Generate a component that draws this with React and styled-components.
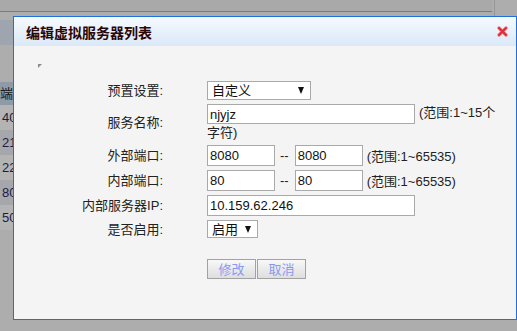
import React from 'react';
import styled, { createGlobalStyle } from 'styled-components';

const GlobalStyle = createGlobalStyle`
  html, body {
    margin: 0;
    padding: 0;
  }
  body {
    background: #adadad;
    font-family: "Liberation Sans", "Noto Sans CJK SC", sans-serif;
    font-size: 13px;
    overflow: hidden;
  }
`;

const Page = styled.div`
  position: relative;
  width: 517px;
  height: 331px;
  overflow: hidden;
  background: #adadad;
`;

/* the page behind the dialog, dimmed */
const TopBar = styled.div`
  display: flex;
  height: 16px;
`;

const TopLine = styled.div`
  width: 492px;
  height: 11px;
  background: #a9a9a9;
  border-bottom: 1px solid #7b7b7b;
`;

const TopDivider = styled.div`
  width: 1px;
  margin-left: 2px;
  background: #979797;
`;

const TabBand = styled.div`
  height: 25px;
  margin-top: 4px;
  background: #9ea5ae;
`;

const ListTable = styled.div`
  margin-top: 37px;
  width: 120px;
`;

const ListRow = styled.div`
  height: ${({ $head }) => ($head ? 23 : 25)}px;
  line-height: ${({ $head }) => ($head ? 23 : 25)}px;
  padding-left: ${({ $head }) => ($head ? 0 : 2)}px;
  white-space: nowrap;
  color: ${({ $head }) => ($head ? '#161616' : '#1c1c44')};
  background: ${({ $head, $alt }) => ($head ? '#8f9aa7' : $alt ? '#a5a7ab' : '#b4b4b4')};
`;

/* dialog */
const Dialog = styled.div`
  position: absolute;
  left: 13px;
  top: 16px;
  width: 504px;
  height: 304px;
  box-sizing: border-box;
  border: 1px solid #1f6fdf;
  background: #f4f4f4;
  display: flex;
  flex-direction: column;
`;

const TitleBar = styled.div`
  flex: none;
  height: 29px;
  display: flex;
  align-items: center;
  justify-content: space-between;
  padding: 0 8px 0 12px;
  background: linear-gradient(#f6faff, #dae8f8);
`;

const Title = styled.h1`
  margin: 0;
  font-family: "Noto Sans CJK SC", sans-serif;
  font-size: 14px;
  font-weight: bold;
  line-height: 16px;
  color: #2b0606;
`;

const CloseButton = styled.span`
  display: flex;
  width: 11px;
  height: 11px;
  cursor: pointer;
`;

const Body = styled.div`
  flex: 1;
`;

const BrokenImage = styled.div`
  display: flex;
  width: 4px;
  height: 4px;
  margin: 18px 0 0 24px;
`;

const Form = styled.div`
  display: grid;
  grid-template-columns: 149px auto;
  grid-template-rows: 19px 37px 21px 21px 21px 18px auto;
  column-gap: 44px;
  row-gap: 4px;
  margin-top: 13px;
`;

const Label = styled.div`
  align-self: center;
  text-align: right;
  line-height: 15px;
  color: #222;
  font-family: "Liberation Sans", "Noto Sans CJK SC", sans-serif;
`;

const Field = styled.div`
  display: flex;
  align-items: center;
`;

const WrapField = styled.div`
  width: 296px;
  line-height: 17px;
  color: #222;
`;

const TextInput = styled.input`
  box-sizing: border-box;
  width: ${({ $w }) => $w}px;
  height: ${({ $h }) => $h || 21}px;
  margin: 0;
  padding: 0 2px;
  border: 1px solid #a9a9a9;
  background: #fff;
  color: #111;
  font-family: "Liberation Sans", "Noto Sans CJK SC", sans-serif;
  font-size: 13px;
  vertical-align: top;
  outline: none;
`;

const Dash = styled.span`
  margin: 0 6px 0 5px;
  color: #222;
`;

const Hint = styled.span`
  margin-left: ${({ $gap }) => $gap || 0}px;
  color: #222;
  white-space: ${({ $wrap }) => ($wrap ? 'normal' : 'nowrap')};
`;

const SelectBox = styled.div`
  box-sizing: border-box;
  width: ${({ $w }) => $w}px;
  height: ${({ $h }) => $h}px;
  display: flex;
  align-items: center;
  justify-content: space-between;
  padding: 0 6px 0 4px;
  border: 1px solid #a9a9a9;
  background: #fff;
  color: #111;
  line-height: 15px;
  cursor: default;
`;

const Caret = styled.span`
  width: 0;
  height: 0;
  border-left: 3.5px solid transparent;
  border-right: 3.5px solid transparent;
  border-top: 7px solid #111;
`;

const Buttons = styled.div`
  grid-column: 2;
  display: flex;
  gap: 1px;
  margin-top: 17px;
`;

const Button = styled.button`
  box-sizing: border-box;
  width: 49px;
  height: 20px;
  margin: 0;
  padding: 0;
  border: 1px solid #a2a2a2;
  background: linear-gradient(#f8f8f8, #dedede);
  color: #8a99f0;
  font-family: "Noto Sans CJK SC", sans-serif;
  font-size: 13px;
  line-height: 16px;
  cursor: pointer;
`;

const listRows = ['40', '21', '22', '80', '50'];

const App = () => (
  <Page>
    <GlobalStyle />
    <TopBar>
      <TopLine />
      <TopDivider />
    </TopBar>
    <TabBand />
    <ListTable>
      <ListRow $head>端口</ListRow>
      {listRows.map((v, i) => (
        <ListRow key={v + i} $alt={i % 2 === 1}>{v}00</ListRow>
      ))}
    </ListTable>

    <Dialog>
      <TitleBar>
        <Title>编辑虚拟服务器列表</Title>
        <CloseButton>
          <svg width="11" height="11" viewBox="0 0 11 11">
            <path d="M2 2 L9 9 M9 2 L2 9" stroke="#f08a8e" strokeWidth="3.4" strokeLinecap="round" />
            <path d="M2 2 L9 9 M9 2 L2 9" stroke="#e02f35" strokeWidth="2.2" strokeLinecap="round" />
          </svg>
        </CloseButton>
      </TitleBar>
      <Body>
        <BrokenImage>
          <svg width="4" height="4" viewBox="0 0 4 4">
            <polygon points="0,0 4,0 0,4" fill="#8c8c8c" />
          </svg>
        </BrokenImage>
        <Form>
          <Label>预置设置:</Label>
          <SelectBox $w={104} $h={19}>
            自定义
            <Caret />
          </SelectBox>

          <Label>服务名称:</Label>
          <WrapField>
            <TextInput $w={208} $h={20} defaultValue="njyjz" />
            <Hint $gap={4} $wrap>(范围:1~15个字符)</Hint>
          </WrapField>

          <Label>外部端口:</Label>
          <Field>
            <TextInput $w={68} defaultValue="8080" />
            <Dash>--</Dash>
            <TextInput $w={68} defaultValue="8080" />
            <Hint $gap={4}>(范围:1~65535)</Hint>
          </Field>

          <Label>内部端口:</Label>
          <Field>
            <TextInput $w={68} defaultValue="80" />
            <Dash>--</Dash>
            <TextInput $w={68} defaultValue="80" />
            <Hint $gap={4}>(范围:1~65535)</Hint>
          </Field>

          <Label>内部服务器IP:</Label>
          <Field>
            <TextInput $w={208} defaultValue="10.159.62.246" />
          </Field>

          <Label>是否启用:</Label>
          <SelectBox $w={51} $h={18}>
            启用
            <Caret />
          </SelectBox>

          <Buttons>
            <Button>修改</Button>
            <Button>取消</Button>
          </Buttons>
        </Form>
      </Body>
    </Dialog>
  </Page>
);

export default App;
